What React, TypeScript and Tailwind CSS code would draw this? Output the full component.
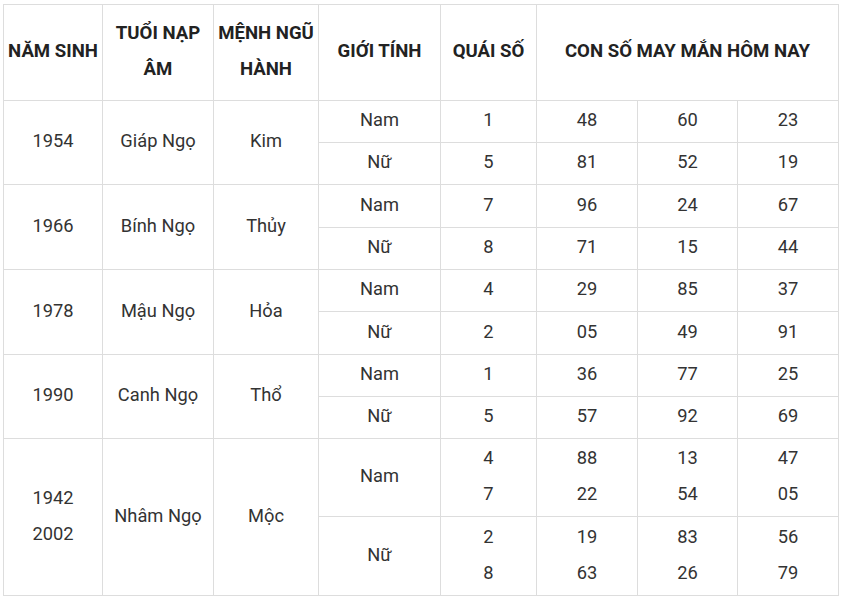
import React from "react";

const cell = "border border-[#dddddd] text-center align-middle p-0 pb-[3px]";

type Row = { g: string; q: string[]; n: string[][] };
type Block = { year: string[]; tuoi: string; menh: string; rows: Row[]; h: number[] };

const blocks: Block[] = [
  { year: ["1954"], tuoi: "Giáp Ngọ", menh: "Kim", h: [42, 42], rows: [
    { g: "Nam", q: ["1"], n: [["48"], ["60"], ["23"]] },
    { g: "Nữ", q: ["5"], n: [["81"], ["52"], ["19"]] },
  ] },
  { year: ["1966"], tuoi: "Bính Ngọ", menh: "Thủy", h: [43, 42], rows: [
    { g: "Nam", q: ["7"], n: [["96"], ["24"], ["67"]] },
    { g: "Nữ", q: ["8"], n: [["71"], ["15"], ["44"]] },
  ] },
  { year: ["1978"], tuoi: "Mậu Ngọ", menh: "Hỏa", h: [42, 43], rows: [
    { g: "Nam", q: ["4"], n: [["29"], ["85"], ["37"]] },
    { g: "Nữ", q: ["2"], n: [["05"], ["49"], ["91"]] },
  ] },
  { year: ["1990"], tuoi: "Canh Ngọ", menh: "Thổ", h: [42, 42], rows: [
    { g: "Nam", q: ["1"], n: [["36"], ["77"], ["25"]] },
    { g: "Nữ", q: ["5"], n: [["57"], ["92"], ["69"]] },
  ] },
  { year: ["1942", "2002"], tuoi: "Nhâm Ngọ", menh: "Mộc", h: [78, 79], rows: [
    { g: "Nam", q: ["4", "7"], n: [["88", "22"], ["13", "54"], ["47", "05"]] },
    { g: "Nữ", q: ["2", "8"], n: [["19", "63"], ["83", "26"], ["56", "79"]] },
  ] },
];

function Lines({ items }: { items: string[] }) {
  return (
    <>
      {items.map((t, i) => (
        <div key={i}>{t}</div>
      ))}
    </>
  );
}

export default function App() {
  return (
    <div className="w-[843px] h-[601px] bg-white pt-[4px] pl-[3px]" style={{ fontFamily: "Roboto, 'Noto Sans', sans-serif" }}>
      <table className="border-collapse table-fixed w-[835px] text-[18.3px] leading-[36px] text-[#333333]">
        <colgroup>
          <col className="w-[99px]" />
          <col className="w-[111px]" />
          <col className="w-[105px]" />
          <col className="w-[122px]" />
          <col className="w-[96px]" />
          <col className="w-[101px]" />
          <col className="w-[100px]" />
          <col className="w-[101px]" />
        </colgroup>
        <thead>
          <tr className="h-[96px] font-bold text-[#222222] text-[18.6px]">
            <th className={cell}>NĂM SINH</th>
            <th className={cell}>TUỔI NẠP<br />ÂM</th>
            <th className={cell}>MỆNH NGŨ<br />HÀNH</th>
            <th className={cell}>GIỚI TÍNH</th>
            <th className={cell}>QUÁI SỐ</th>
            <th className={cell} colSpan={3}>CON SỐ MAY MẮN HÔM NAY</th>
          </tr>
        </thead>
        <tbody>
          {blocks.map((b, bi) =>
            b.rows.map((r, ri) => (
              <tr key={bi + "-" + ri} style={{ height: b.h[ri] }}>
                {ri === 0 && (
                  <>
                    <td className={cell} rowSpan={2}><Lines items={b.year} /></td>
                    <td className={cell} rowSpan={2}>{b.tuoi}</td>
                    <td className={cell} rowSpan={2}>{b.menh}</td>
                  </>
                )}
                <td className={cell}>{r.g}</td>
                <td className={cell}><Lines items={r.q} /></td>
                {r.n.map((n, ni) => (
                  <td key={ni} className={cell}><Lines items={n} /></td>
                ))}
              </tr>
            ))
          )}
        </tbody>
      </table>
    </div>
  );
}
